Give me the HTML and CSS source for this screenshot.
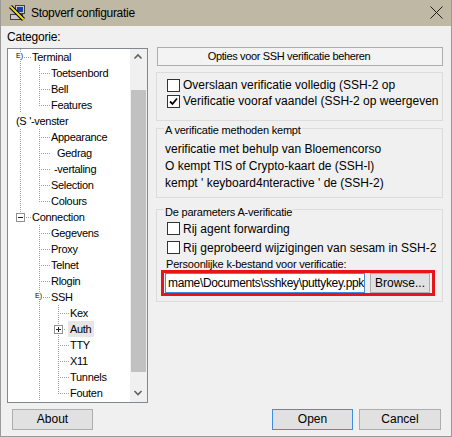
FILE: index.html
```html
<!DOCTYPE html>
<html>
<head>
<meta charset="utf-8">
<link rel="stylesheet" href="styles.css">
</head>
<body>
<div class="win">
  <div class="title">
    <svg class="ticon" width="16" height="16" viewBox="0 0 16 16">
      <rect x="6.5" y="0.5" width="9" height="8" fill="#c8c8c8" stroke="#404040"/>
      <rect x="8" y="2" width="6" height="5" fill="#1c3fa8"/>
      <rect x="1.5" y="9.5" width="12" height="5" fill="#c8c8c8" stroke="#404040"/>
      <path d="M1.5 1.5 L14.5 14.5" stroke="#000" stroke-width="4"/>
      <path d="M1.5 1.5 L14.5 14.5" stroke="#f2e200" stroke-width="2"/>
    </svg>
    <span class="ttext">Stopverf configuratie</span>
    <svg class="tclose" width="13" height="13" viewBox="0 0 13 13">
      <path d="M0.5 0.5 L12.5 12.5 M12.5 0.5 L0.5 12.5" stroke="#1e1e1e" stroke-width="1" fill="none"/>
    </svg>
  </div>
  <div class="main">
    <div class="left">
      <div class="cat">Categorie:</div>
      <div class="tree">
        <div class="tc">
          <div class="r"><span class="g t"><span class="eg">E)</span></span><span class="lb">Terminal</span></div>
          <div class="r"><span class="g v"></span><span class="g t"></span><span class="lb">Toetsenbord</span></div>
          <div class="r"><span class="g v"></span><span class="g t"></span><span class="lb">Bell</span></div>
          <div class="r"><span class="g v"></span><span class="g l"></span><span class="lb">Features</span></div>
          <div class="r"><span class="lbx">(S '-venster</span></div>
          <div class="r"><span class="g v"></span><span class="g t"></span><span class="lb">Appearance</span></div>
          <div class="r"><span class="g v"></span><span class="g t"></span><span class="lb p11">Gedrag</span></div>
          <div class="r"><span class="g v"></span><span class="g t"></span><span class="lb p8">-vertaling</span></div>
          <div class="r"><span class="g v"></span><span class="g t"></span><span class="lb">Selection</span></div>
          <div class="r"><span class="g v"></span><span class="g l"></span><span class="lb">Colours</span></div>
          <div class="r"><span class="g l"><svg class="bx" width="9" height="9" viewBox="0 0 9 9"><rect x="0.5" y="0.5" width="8" height="8" fill="#fff" stroke="#919191"/><path d="M2 4.5 H7" stroke="#222"/></svg></span><span class="lb">Connection</span></div>
          <div class="r"><span class="g"></span><span class="g t"></span><span class="lb">Gegevens</span></div>
          <div class="r"><span class="g"></span><span class="g t"></span><span class="lb">Proxy</span></div>
          <div class="r"><span class="g"></span><span class="g t"></span><span class="lb">Telnet</span></div>
          <div class="r"><span class="g"></span><span class="g t"></span><span class="lb">Rlogin</span></div>
          <div class="r"><span class="g"></span><span class="g t"><span class="eg">E)</span></span><span class="lb">SSH</span></div>
          <div class="r"><span class="g"></span><span class="g v"></span><span class="g t"></span><span class="lb">Kex</span></div>
          <div class="r"><span class="g"></span><span class="g v"></span><span class="g t"><svg class="bx" width="9" height="9" viewBox="0 0 9 9"><rect x="0.5" y="0.5" width="8" height="8" fill="#fff" stroke="#919191"/><path d="M2 4.5 H7 M4.5 2 V7" stroke="#222"/></svg></span><span class="lb sel">Auth</span></div>
          <div class="r"><span class="g"></span><span class="g v"></span><span class="g t"></span><span class="lb">TTY</span></div>
          <div class="r"><span class="g"></span><span class="g v"></span><span class="g t"></span><span class="lb">X11</span></div>
          <div class="r"><span class="g"></span><span class="g v"></span><span class="g t"></span><span class="lb">Tunnels</span></div>
          <div class="r"><span class="g"></span><span class="g v"></span><span class="g l"></span><span class="lb">Fouten</span></div>
        </div>
        <div class="sbar">
          <div class="sarrow"><svg width="17" height="17" viewBox="0 0 17 17"><path d="M4.5 9.5 L8 6 L11.5 9.5" stroke="#606060" stroke-width="1.6" fill="none"/></svg></div>
          <div class="strack"><div class="thumb"></div></div>
          <div class="sarrow"><svg width="17" height="17" viewBox="0 0 17 17"><path d="M4.5 6 L8 9.5 L11.5 6" stroke="#606060" stroke-width="1.6" fill="none"/></svg></div>
        </div>
      </div>
    </div>
    <div class="right">
      <div class="hdr">Opties voor SSH verificatie beheren</div>
      <div class="grp g1">
        <div class="cbrow"><span class="cb"></span><span>Overslaan verificatie volledig (SSH-2 op</span></div>
        <div class="cbrow"><span class="cb"><svg width="11" height="11" viewBox="0 0 11 11"><path d="M2 5.5 L4.5 8 L9 2.5" stroke="#000" stroke-width="1.8" fill="none"/></svg></span><span>Verificatie vooraf vaandel (SSH-2 op weergeven</span></div>
      </div>
      <div class="grp g2">
        <div class="lg">A verificatie methoden kempt</div>
        <div class="lines">
          <div>verificatie met behulp van Bloemencorso</div>
          <div>O kempt TIS of Crypto-kaart de (SSH-l)</div>
          <div>kempt ' keyboard4nteractive ' de (SSH-2)</div>
        </div>
      </div>
      <div class="grp g3">
        <div class="lg">De parameters A-verificatie</div>
        <div class="cbrow tall"><span class="cb"></span><span>Rij agent forwarding</span></div>
        <div class="cbrow tall"><span class="cb"></span><span>Rij geprobeerd wijzigingen van sesam in SSH-2</span></div>
        <div class="kl">Persoonlijke k-bestand voor verificatie:</div>
        <div class="hl">
          <div class="inp">mame\Documents\sshkey\puttykey.ppk<span class="caret"></span></div>
          <div class="btn br">Browse...</div>
        </div>
      </div>
    </div>
  </div>
  <div class="foot">
    <div class="btn about">About</div>
    <div class="btn open">Open</div>
    <div class="btn cancel">Cancel</div>
  </div>
</div>
</body>
</html>
```
FILE: styles.css
```css
* { box-sizing: border-box; }
html, body { margin: 0; padding: 0; }
body {
  font-family: "Liberation Sans", Arial, sans-serif;
  font-size: 12px;
  color: #000;
  background: #f0f0f0;
}
.win {
  width: 452px;
  height: 437px;
  border: 1px solid #9a9a9a;
  border-top: 0;
  background: #f0f0f0;
  display: flex;
  flex-direction: column;
  overflow: hidden;
}
.title {
  flex: none;
  height: 26px;
  background: #bfb8a4;
  display: flex;
  align-items: center;
  padding-left: 8px;
}
.ticon { display: block; flex: none; }
.ttext {
  margin-left: 6px;
  font-size: 12px;
  letter-spacing: -0.3px;
}
.tclose { display: block; margin-left: auto; margin-right: 8px; margin-top: -1px; }

.main {
  flex: none;
  height: 377px;
  display: grid;
  grid-template-columns: 141px 287px;
  column-gap: 8px;
  padding: 4px 8px 0 6px;
}
.cat {
  height: 14px;
  line-height: 14px;
  margin-bottom: 4px;
  letter-spacing: -0.2px;
}
.tree {
  height: 355px;
  border: 1px solid #828790;
  background: #fff;
  display: flex;
}
.tc {
  flex: 1;
  overflow: hidden;
}
.r {
  display: flex;
  height: 16px;
  line-height: 16px;
  white-space: nowrap;
  font-size: 11px;
  letter-spacing: -0.3px;
}
.g {
  display: block;
  flex: none;
  width: 19px;
  height: 16px;
}
.v {
  background: repeating-linear-gradient(to bottom, #a0a0a0 0 1px, transparent 1px 2px) 12px 0 / 1px 16px no-repeat;
}
.t {
  background:
    repeating-linear-gradient(to bottom, #a0a0a0 0 1px, transparent 1px 2px) 12px 0 / 1px 16px no-repeat,
    repeating-linear-gradient(to right, #a0a0a0 0 1px, transparent 1px 2px) 14px 8px / 5px 1px no-repeat;
}
.l {
  background:
    repeating-linear-gradient(to bottom, #a0a0a0 0 1px, transparent 1px 2px) 12px 0 / 1px 9px no-repeat,
    repeating-linear-gradient(to right, #a0a0a0 0 1px, transparent 1px 2px) 14px 8px / 5px 1px no-repeat;
}
.lb {
  padding-left: 5px;
  background: repeating-linear-gradient(to right, #a0a0a0 0 1px, transparent 1px 2px) 1px 8px / 3px 1px no-repeat;
}
.lb.p11 { padding-left: 11px; }
.lb.p8 { padding-left: 8px; }
.lbx { padding-left: 8px; }
.lb.sel {
  margin-left: 3px;
  padding: 0 3px 0 2px;
  background: #e6e6e6;
}
.bx { display: block; margin: 4px 0 0 8px; }
.eg {
  display: block;
  width: 7px;
  margin: 3px 0 0 8px;
  font-size: 7px;
  line-height: 7px;
  letter-spacing: 0;
  background: #fff;
}

.sbar {
  flex: none;
  width: 17px;
  background: #f0f0f0;
  display: flex;
  flex-direction: column;
}
.sarrow { height: 17px; flex: none; }
.sarrow svg { display: block; }
.strack { flex: 1; padding-top: 24px; }
.thumb {
  height: 282px;
  margin: 0 1px;
  background: #c1c1c1;
}

.hdr {
  margin: 17px 0 0 1px;
  height: 19px;
  border: 1px solid #adadad;
  background: #f3f3f3;
  font-size: 11px;
  letter-spacing: -0.35px;
  line-height: 17px;
  text-align: center;
  padding-right: 22px;
  white-space: nowrap;
}
.grp {
  border: 1px solid #dcdcdc;
  white-space: nowrap;
}
.g1 {
  margin-top: 6px;
  height: 49px;
  padding: 4px 0 0 10px;
  overflow: hidden;
}
.cbrow {
  display: flex;
  align-items: center;
  height: 16px;
  gap: 3px;
}
.cbrow.tall { height: 19px; margin-left: 2px; }
.g3 .cbrow.tall:first-of-type { margin-top: 2px; }
.cb {
  flex: none;
  width: 13px;
  height: 13px;
  border: 1px solid #333;
  background: #fff;
}
.cb svg { display: block; }
.g2 {
  margin-top: 7px;
  height: 70px;
  padding-left: 8px;
}
.lg {
  width: fit-content;
  margin-left: -1px;
  padding: 0 1px;
  background: #f0f0f0;
  font-size: 11px;
  letter-spacing: -0.2px;
  line-height: 13px;
}
.g2 .lg { margin-top: -5px; }
.lines { padding-top: 4px; line-height: 17px; }
.g3 {
  margin-top: 11px;
  height: 93px;
  padding-left: 8px;
}
.g3 .lg { margin-top: -4px; }
.kl {
  margin: 1px 0 0 1px;
  font-size: 11px;
  letter-spacing: -0.2px;
  line-height: 12px;
}
.hl {
  margin-left: -4px;
  width: 274px;
  height: 26px;
  border: 3px solid #e8141c;
  display: flex;
  gap: 5px;
  padding-left: 1px;
}
.inp {
  width: 200px;
  height: 20px;
  border: 1px solid #3c8fe3;
  background: #fff;
  line-height: 18px;
  padding-left: 2px;
  letter-spacing: -0.35px;
  overflow: hidden;
  white-space: nowrap;
}
.caret {
  display: inline-block;
  width: 1px;
  height: 14px;
  background: #000;
  vertical-align: -3px;
  margin-left: 1px;
}
.btn {
  height: 21px;
  line-height: 19px;
  text-align: center;
  background: #e1e1e1;
  border: 1px solid #adadad;
}
.br { width: 60px; height: 20px; line-height: 18px; }

.foot {
  flex: none;
  display: flex;
  align-items: center;
  padding: 6px 10px 6px 11px;
}
.about { width: 81px; }
.open { width: 81px; margin-left: auto; border-color: #3c8fe3; }
.cancel { width: 82px; margin-left: 6px; }
```
